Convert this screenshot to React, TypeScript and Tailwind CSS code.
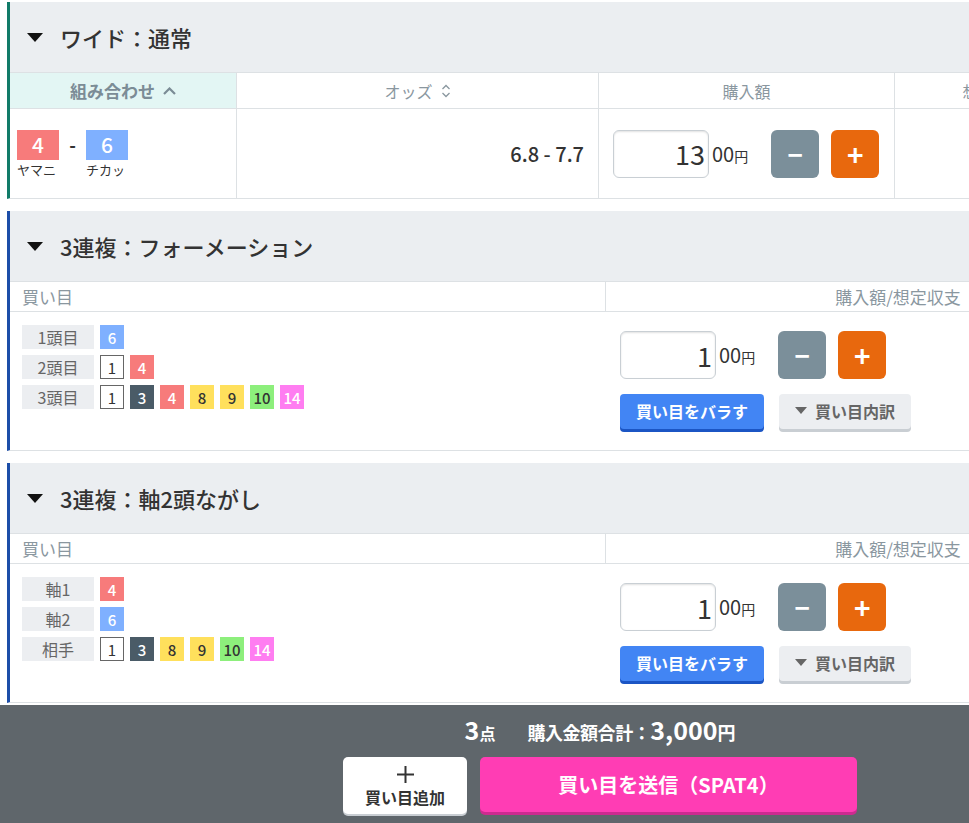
import React from 'react'

const FONT = '"Noto Sans CJK JP", "Noto Sans", sans-serif'

const BOX: Record<number, string> = {
  1: 'bg-white border border-[#666] text-[#333] font-normal',
  3: 'bg-[#4a5b67] text-white',
  4: 'bg-[#f77b7b] text-white',
  6: 'bg-[#7fb0ff] text-white',
  8: 'bg-[#ffe05c] text-[#333]',
  9: 'bg-[#ffe05c] text-[#333]',
  10: 'bg-[#8def7c] text-[#333]',
  14: 'bg-[#ff7df1] text-white',
}

function Num({ n }: { n: number }) {
  return (
    <div
      className={`w-6 h-6 flex items-center justify-center text-[15px] font-medium leading-none ${BOX[n]}`}
    >
      {n}
    </div>
  )
}

function Caret() {
  return (
    <svg width="16" height="9" viewBox="0 0 16 9" className="shrink-0">
      <path d="M0 0h16L8 9z" fill="#111" />
    </svg>
  )
}

function SectionHeader({ title }: { title: string }) {
  return (
    <div className="h-[71px] bg-[#ebeef1] flex items-center gap-[17px] pl-[17px] border-b border-[#dde1e4]">
      <Caret />
      <div className="text-[22px] font-medium text-[#333]">{title}</div>
    </div>
  )
}

function Stepper({ value }: { value: string }) {
  return (
    <div className="flex items-center">
      <div className="w-24 h-12 rounded-md border border-[#c9cfd4] shadow-[inset_0_1px_2px_rgba(0,0,0,0.12)] bg-white flex items-center justify-end pr-[3px] text-[27px] text-[#333] leading-none">
        {value}
      </div>
      <div className="ml-[3px] text-[#333] leading-none">
        <span className="text-[20px]">00</span>
        <span className="text-[14px]">円</span>
      </div>
      <button className="ml-[23px] w-12 h-12 rounded-md bg-[#7b8f9a] text-white text-[26px] font-bold leading-none flex items-center justify-center">
        −
      </button>
      <button className="ml-3 w-12 h-12 rounded-md bg-[#e8680d] text-white text-[28px] font-bold leading-none flex items-center justify-center">
        +
      </button>
    </div>
  )
}

function ActionButtons() {
  return (
    <div className="flex items-center gap-[15px] mt-[15px]">
      <button className="w-[144px] h-[35px] rounded-[4px] bg-[#4285f4] shadow-[0_3px_0_#1b55c4] text-white text-[16px] font-bold flex items-center justify-center pb-[2px]">
        買い目をバラす
      </button>
      <button className="w-[132px] h-[35px] rounded-[4px] bg-[#eceef1] shadow-[0_3px_0_#c9ced3] text-[#666] text-[16px] font-bold flex items-center justify-center gap-2 pb-[2px]">
        <svg width="12" height="7" viewBox="0 0 12 7">
          <path d="M0 0h12L6 7z" fill="#666" />
        </svg>
        買い目内訳
      </button>
    </div>
  )
}

function Label({ text }: { text: string }) {
  return (
    <div className="w-[72px] h-6 bg-[#eceef1] flex items-center justify-center text-[16px] text-[#666] leading-none">
      {text}
    </div>
  )
}

function BetSection({
  title,
  rows,
}: {
  title: string
  rows: { label: string; nums: number[] }[]
}) {
  return (
    <section className="border-l-[3px] border-[#1d4ea8] border-b border-b-[#dde1e4] mt-3">
      <SectionHeader title={title} />
      <div className="flex h-[30px] border-b border-[#dde1e4] text-[17px] text-[#8a979f]">
        <div className="w-[596px] border-r border-[#dde1e4] flex items-center pl-3">買い目</div>
        <div className="flex-1 flex items-center justify-center pr-[10px]">購入額/想定収支</div>
      </div>
      <div className="flex h-[138px]">
        <div className="w-[596px] pt-[13px] pl-3 flex flex-col gap-[6px]">
          {rows.map((r) => (
            <div key={r.label} className="flex items-center gap-[6px]">
              <Label text={r.label} />
              {r.nums.map((n) => (
                <Num key={n} n={n} />
              ))}
            </div>
          ))}
        </div>
        <div className="flex-1 pt-[19px] pl-[14px]">
          <Stepper value="1" />
          <ActionButtons />
        </div>
      </div>
    </section>
  )
}

export default function App() {
  return (
    <div className="w-full h-[823px] overflow-hidden bg-white" style={{ fontFamily: FONT }}>
      <div className="w-[1200px] flex flex-col">
        <div className="pl-[7px] pt-[2px]">
          <section className="border-l-[3px] border-[#117b68] border-b border-b-[#dde1e4]">
            <SectionHeader title="ワイド：通常" />
            <div className="flex h-[36px] border-b border-[#dde1e4] text-[16px]">
              <div className="w-[227px] bg-[#e3f6f4] border-r border-[#dde1e4] flex items-center justify-center gap-2 text-[17px] text-[#7b8c96] font-bold">
                組み合わせ
                <svg width="13" height="8" viewBox="0 0 13 8">
                  <path d="M1 7l5.5-5.5L12 7" fill="none" stroke="#7b8c96" strokeWidth="2.2" />
                </svg>
              </div>
              <div className="w-[362px] border-r border-[#dde1e4] flex items-center justify-center gap-2 text-[#8a979f]">
                オッズ
                <svg width="10" height="16" viewBox="0 0 10 16">
                  <path d="M1.5 6L5 2.5 8.5 6M1.5 10L5 13.5 8.5 10" fill="none" stroke="#8a979f" strokeWidth="1.3" />
                </svg>
              </div>
              <div className="w-[296px] border-r border-[#dde1e4] flex items-center justify-center text-[#8a979f]">
                購入額
              </div>
              <div className="w-[200px] border-r border-[#dde1e4] flex items-center justify-center text-[#8a979f]">
                想定払戻
              </div>
              <div className="flex-1" />
            </div>
            <div className="flex h-[89px]">
              <div className="w-[227px] border-r border-[#dde1e4] flex items-center pl-[7px]">
                <div className="flex items-start">
                  <div className="flex flex-col items-start">
                    <div className="w-[42px] h-[30px] bg-[#f77b7b] text-white text-[21px] font-medium flex items-center justify-center leading-none">
                      4
                    </div>
                    <div className="text-[13px] text-[#333] mt-[2px] leading-[16px]">ヤマニ</div>
                  </div>
                  <div className="w-[27px] h-[30px] flex items-center justify-center text-[18px] font-bold text-[#333]">
                    -
                  </div>
                  <div className="flex flex-col items-start">
                    <div className="w-[42px] h-[30px] bg-[#7fb0ff] text-white text-[21px] font-medium flex items-center justify-center leading-none">
                      6
                    </div>
                    <div className="text-[13px] text-[#333] mt-[2px] leading-[16px]">チカッ</div>
                  </div>
                </div>
              </div>
              <div className="w-[362px] border-r border-[#dde1e4] flex items-center justify-end pr-[14px] text-[20px] font-medium text-[#333]">
                6.8 - 7.7
              </div>
              <div className="w-[296px] border-r border-[#dde1e4] flex items-center pl-[14px]">
                <Stepper value="13" />
              </div>
              <div className="w-[200px] border-r border-[#dde1e4]" />
              <div className="flex-1" />
            </div>
          </section>

          <BetSection
            title="3連複：フォーメーション"
            rows={[
              { label: '1頭目', nums: [6] },
              { label: '2頭目', nums: [1, 4] },
              { label: '3頭目', nums: [1, 3, 4, 8, 9, 10, 14] },
            ]}
          />
          <BetSection
            title="3連複：軸2頭ながし"
            rows={[
              { label: '軸1', nums: [4] },
              { label: '軸2', nums: [6] },
              { label: '相手', nums: [1, 3, 8, 9, 10, 14] },
            ]}
          />
        </div>

        <footer className="mt-[2px] h-[120px] bg-[#5f666b] flex flex-col items-center pt-[12px]">
          <div className="flex items-baseline text-white font-bold leading-none">
            <span className="text-[25px]">3</span>
            <span className="text-[16px]">点</span>
            <span className="ml-[32px] text-[18px] tracking-tight">購入金額合計：</span>
            <span className="text-[25px]">3,000</span>
            <span className="text-[18px]">円</span>
          </div>
          <div className="flex gap-[13px] mt-[15px]">
            <button className="w-[124px] h-[57px] rounded-[5px] bg-white shadow-[0_2px_0_#c9ced3] flex flex-col items-center justify-center gap-[5px] text-[#333]">
              <svg width="17" height="17" viewBox="0 0 17 17">
                <path d="M8.5 0v17M0 8.5h17" stroke="#333" strokeWidth="2" />
              </svg>
              <span className="text-[16px] font-bold leading-[18px]">買い目追加</span>
            </button>
            <button className="w-[377px] h-[55px] rounded-[5px] bg-[#ff3db4] shadow-[0_3px_0_#cc2b8f] text-white text-[20px] font-bold flex items-center justify-center">
              買い目を送信（SPAT4）
            </button>
          </div>
        </footer>
      </div>
    </div>
  )
}
